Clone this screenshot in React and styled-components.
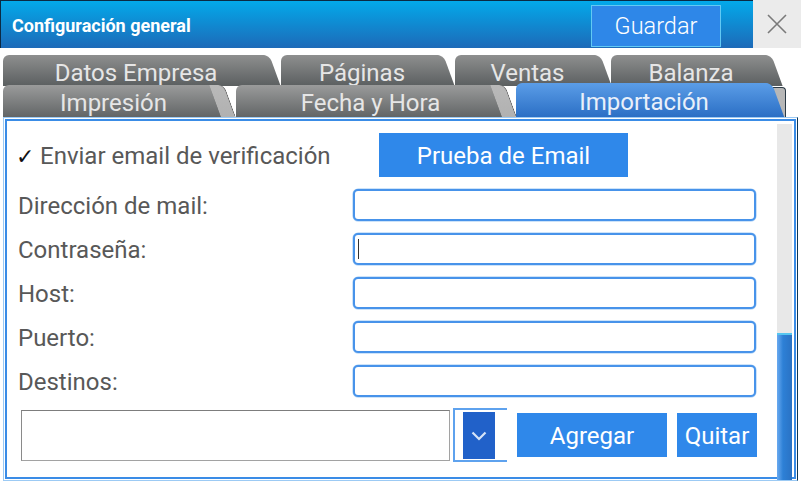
import React from "react";
import styled, { createGlobalStyle } from "styled-components";

const GlobalStyle = createGlobalStyle`
  html, body {
    margin: 0;
    padding: 0;
    background: #fff;
  }
  body {
    font-family: Roboto, "Noto Sans", sans-serif;
  }
`;

const Window = styled.div`
  width: 801px;
  height: 481px;
  overflow: hidden;
  display: flex;
  flex-direction: column;
  background: #fff;
`;

// Title bar
const TitleBar = styled.div`
  height: 48px;
  flex-shrink: 0;
  display: flex;
  align-items: stretch;
`;

const TitleMain = styled.div`
  flex: 1;
  display: flex;
  align-items: center;
  background: linear-gradient(#03a9ea, #1d6ab8);
  border-top: 1px solid #0b2a44;
  border-left: 1px solid #0b2a44;
  padding-left: 11px;
  padding-right: 32px;
`;

const TitleText = styled.div`
  flex: 1;
  color: #fff;
  font-weight: 700;
  font-size: 18px;
  padding-top: 1px;
`;

const SaveButton = styled.button`
  width: 130px;
  height: 42px;
  margin-top: 2px;
  background: #2e87e8;
  border: 1px solid #62c9f4;
  color: #fff;
  font-family: Roboto, sans-serif;
  font-weight: 300;
  font-size: 23.5px;
  padding: 0;
`;

const CloseBox = styled.div`
  width: 48px;
  background: #ebebeb;
  display: flex;
  align-items: center;
  justify-content: center;
`;

// Tabs
const TabStrip = styled.div`
  padding: 7px 0 0 3px;
  display: flex;
  flex-direction: column;
  flex-shrink: 0;
`;

const TabRow = styled.div`
  display: flex;
  align-items: flex-end;
  height: ${(p) => p.$h}px;
  margin-top: ${(p) => p.$top || 0}px;
`;

const Tab = styled.div`
  position: relative;
  z-index: 0;
  width: ${(p) => p.$w}px;
  margin-left: ${(p) => p.$ml || 0}px;
  height: ${(p) => p.$h}px;
  box-sizing: border-box;
  border-radius: 6px 7px 0 0;
  background: ${(p) =>
    p.$active
      ? "linear-gradient(#5b9de7, #2b6fc5)"
      : p.$light
      ? "linear-gradient(#9a9b9b, #626566)"
      : "linear-gradient(#8e8f8f, #5b5f60)"};
  color: ${(p) => (p.$active ? "#e9f0fa" : "#e6e6e6")};
  font-size: 24px;
  line-height: 1;
  display: flex;
  align-items: center;
  justify-content: center;
  padding-top: 4px;

  &::after {
    content: "";
    position: absolute;
    z-index: -1;
    top: 0;
    bottom: 0;
    right: -6px;
    width: 14px;
    border-top-right-radius: 6px;
    background: ${(p) =>
      p.$ear === "light"
        ? "linear-gradient(#b9b9b9, #b1b1b1)"
        : "inherit"};
    border-right: ${(p) => (p.$ear === "light" ? "1px solid #555" : "none")};
    transform: skewX(20deg);
  }
`;

const TabTail = styled.div`
  width: 14px;
  height: 30px;
  background: #b7b7b7;
  border-top: 1px solid #2b3a46;
  border-right: 1px solid #2b3a46;
  border-top-right-radius: 4px;
  box-sizing: border-box;
`;

// Content panel
const Panel = styled.div`
  flex: 1;
  min-height: 0;
  margin: 0 3px 0 3px;
  border: 1px solid #9ccaf4;
  box-shadow: inset 0 0 0 1px #fff, inset 0 0 0 3px #3a8ce6;
  display: flex;
  border-right-color: #0d3552;
`;

const Form = styled.div`
  flex: 1;
  padding: 15px 0 0 14px;
  display: flex;
  flex-direction: column;
`;

const CheckRow = styled.div`
  display: flex;
  align-items: center;
  height: 44px;
`;

const CheckLabel = styled.div`
  width: 361px;
  display: flex;
  align-items: center;
  color: #585858;
  font-size: 24px;
  padding-top: 2px;
`;

const CheckMark = styled.span`
  color: #111;
  font-size: 22px;
  font-weight: 700;
  width: 24px;
  margin-left: -2px;
  font-family: "DejaVu Sans", sans-serif;
`;

const BlueButton = styled.button`
  width: ${(p) => p.$w}px;
  height: 44px;
  margin-left: ${(p) => p.$ml || 0}px;
  background: #2f88ea;
  border: none;
  color: #fff;
  font-family: Roboto, sans-serif;
  font-size: 24px;
  padding: 2px 0 0;
  flex-shrink: 0;
`;

const Fields = styled.div`
  display: grid;
  grid-template-columns: 335px 403px;
  grid-auto-rows: 32px;
  row-gap: 12px;
  margin-top: 12px;
`;

const FieldLabel = styled.div`
  color: #585858;
  font-size: 24px;
  display: flex;
  align-items: center;
  padding-top: 2px;
`;

const TextBox = styled.div`
  border: 2px solid #4893ea;
  border-radius: 5px;
  box-shadow: 0 0 0 0.5px #9cc8f4;
  background: #fff;
  display: flex;
  align-items: center;
  padding-left: 3px;
`;

const Caret = styled.div`
  width: 1px;
  height: 20px;
  background: #333;
`;

const BottomRow = styled.div`
  display: flex;
  align-items: center;
  margin-top: 11px;
  height: 54px;
`;

const ComboInput = styled.div`
  width: 429px;
  height: 51px;
  margin-left: 3px;
  box-sizing: border-box;
  border: 1px solid #a2a2a2;
  border-top-color: #7d7d7d;
  border-left-color: #8a8a8a;
  background: #fff;
`;

const DropWrap = styled.div`
  width: 54px;
  height: 54px;
  margin-left: 3px;
  box-sizing: border-box;
  border: 2px solid #5ea2ee;
  border-right: none;
  padding: 2px 0 0 8px;
`;

const DropButton = styled.div`
  width: 32px;
  height: 47px;
  background: #2161c9;
  display: flex;
  align-items: center;
  justify-content: center;
`;

const Scrollbar = styled.div`
  width: 15px;
  margin: 6px 5px 0 0;
  display: flex;
  flex-direction: column;
`;

const Track = styled.div`
  height: 209px;
  background: #e8e8e8;
`;

const Thumb = styled.div`
  flex: 1;
  border-top: 2px solid #55c6f0;
  background: linear-gradient(90deg, #6aaaf0, #2d80d6 40%, #2a72c4);
`;

export default function App() {
  const fields = [
    "Dirección de mail:",
    "Contraseña:",
    "Host:",
    "Puerto:",
    "Destinos:",
  ];

  return (
    <>
      <GlobalStyle />
      <Window>
        <TitleBar>
          <TitleMain>
            <TitleText>Configuración general</TitleText>
            <SaveButton>Guardar</SaveButton>
          </TitleMain>
          <CloseBox>
            <svg width="20" height="20" viewBox="0 0 20 20">
              <path
                d="M1 1 L19 19 M19 1 L1 19"
                stroke="#7a7a7a"
                strokeWidth="1.6"
                fill="none"
              />
            </svg>
          </CloseBox>
        </TitleBar>

        <TabStrip>
          <TabRow $h={31}>
            <Tab $w={266} $h={31}>Datos Empresa</Tab>
            <Tab $w={162} $h={31} $ml={12}>Páginas</Tab>
            <Tab $w={145} $h={31} $ml={12}>Ventas</Tab>
            <Tab $w={160} $h={31} $ml={11}>Balanza</Tab>
          </TabRow>
          <TabRow $h={33} $top={-2}>
            <Tab $w={221} $h={32} $light $ear="light">Impresión</Tab>
            <Tab $w={269} $h={32} $ml={12} $light $ear="light">Fecha y Hora</Tab>
            <Tab $w={256} $h={34} $ml={11} $active>Importación</Tab>
            <TabTail />
          </TabRow>
        </TabStrip>

        <Panel>
          <Form>
            <CheckRow>
              <CheckLabel>
                <CheckMark>✓</CheckMark>
                Enviar email de verificación
              </CheckLabel>
              <BlueButton $w={249}>Prueba de Email</BlueButton>
            </CheckRow>

            <Fields>
              {fields.map((f, i) => (
                <React.Fragment key={f}>
                  <FieldLabel>{f}</FieldLabel>
                  <TextBox>{i === 1 && <Caret />}</TextBox>
                </React.Fragment>
              ))}
            </Fields>

            <BottomRow>
              <ComboInput />
              <DropWrap>
                <DropButton>
                  <svg width="16" height="10" viewBox="0 0 16 10">
                    <path
                      d="M1.5 1.5 L8 8 L14.5 1.5"
                      stroke="#d6e4f8"
                      strokeWidth="2.2"
                      fill="none"
                    />
                  </svg>
                </DropButton>
              </DropWrap>
              <BlueButton $w={150} $ml={10}>
                Agregar
              </BlueButton>
              <BlueButton $w={80} $ml={10}>
                Quitar
              </BlueButton>
            </BottomRow>
          </Form>
          <Scrollbar>
            <Track />
            <Thumb />
          </Scrollbar>
        </Panel>
      </Window>
    </>
  );
}
